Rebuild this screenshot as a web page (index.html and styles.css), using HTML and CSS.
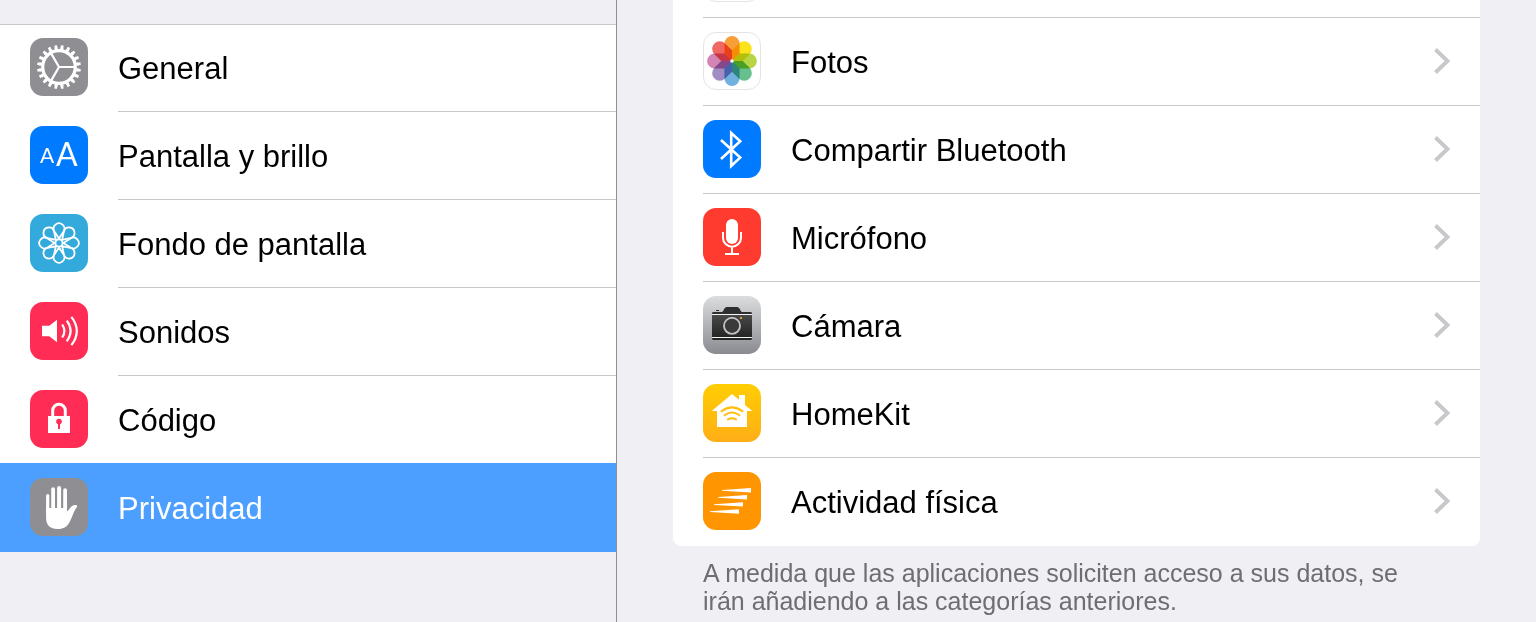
FILE: index.html
```html
<!DOCTYPE html>
<html lang="es">
<head>
    <meta charset="UTF-8">
    <title>Privacidad</title>
    <link rel="stylesheet" href="styles.css">
</head>
<body>
<div class="settings">
    <nav class="sidebar">
        <ul class="menu">
            <li>
                <a href="#general" class="row">
                    <svg class="icon gray" viewBox="0 0 58 58" aria-hidden="true">
                        <g fill="none" stroke="#fff">
                            <circle cx="29" cy="29" r="16.3" stroke-width="3.2"/>
                            <circle cx="29" cy="29" r="18.6" stroke-width="2.4" pathLength="200" stroke-dasharray="5.6 4.4" stroke-dashoffset="-2.2"/>
                            <circle cx="29" cy="29" r="20.6" stroke-width="2.6" pathLength="200" stroke-dasharray="4.2 5.8" stroke-dashoffset="-2.9"/>
                            <path d="M29 29H45M29 29L21 15.1M29 29L21 42.9" stroke-width="2.2"/>
                        </g>
                    </svg>
                    <span class="label">General</span>
                </a>
            </li>
            <li>
                <a href="#pantalla" class="row">
                    <svg class="icon blue" viewBox="0 0 58 58" aria-hidden="true">
                        <text x="10" y="37" class="small-a">A</text>
                        <text x="26" y="40" class="big-a">A</text>
                    </svg>
                    <span class="label">Pantalla y brillo</span>
                </a>
            </li>
            <li>
                <a href="#fondo" class="row">
                    <svg class="icon cyan" viewBox="0 0 58 58" aria-hidden="true">
                        <defs>
                            <path id="petal-line" d="M29 24.6L24.4 17.5A5.4 5.4 0 1 1 33.6 17.5Z"/>
                        </defs>
                        <g fill="none" stroke="#fff" stroke-width="1.8">
                            <circle cx="29" cy="29" r="3.6"/>
                            <use href="#petal-line"/>
                            <use href="#petal-line" transform="rotate(45 29 29)"/>
                            <use href="#petal-line" transform="rotate(90 29 29)"/>
                            <use href="#petal-line" transform="rotate(135 29 29)"/>
                            <use href="#petal-line" transform="rotate(180 29 29)"/>
                            <use href="#petal-line" transform="rotate(225 29 29)"/>
                            <use href="#petal-line" transform="rotate(270 29 29)"/>
                            <use href="#petal-line" transform="rotate(315 29 29)"/>
                        </g>
                    </svg>
                    <span class="label">Fondo de pantalla</span>
                </a>
            </li>
            <li>
                <a href="#sonidos" class="row">
                    <svg class="icon pink" viewBox="0 0 58 58" aria-hidden="true">
                        <path d="M12 23.7H19.3L27 17.7V40.3L19.3 34.3H12Z" fill="#fff"/>
                        <path d="M32.2 22.5Q36.6 29 32.2 35.5M36.8 18.7Q44.4 29 36.8 39.3M41.4 14.8Q52.2 29 41.4 43.2" fill="none" stroke="#fff" stroke-width="2.2"/>
                    </svg>
                    <span class="label">Sonidos</span>
                </a>
            </li>
            <li>
                <a href="#codigo" class="row">
                    <svg class="icon pink" viewBox="0 0 58 58" aria-hidden="true">
                        <path d="M22.7 27V20.6A6.3 6.3 0 0 1 35.3 20.6V27" fill="none" stroke="#fff" stroke-width="3"/>
                        <path d="M18 26H40V43H18Z" fill="#fff"/>
                        <circle cx="29" cy="31.6" r="2.8" fill="#ff2d55"/>
                        <path d="M28 32H30V39H28Z" fill="#ff2d55"/>
                    </svg>
                    <span class="label">Código</span>
                </a>
            </li>
            <li>
                <a href="#privacidad" class="row selected" aria-current="page">
                    <svg class="icon gray" viewBox="0 0 58 58" aria-hidden="true">
                        <g fill="none" stroke="#fff" stroke-linecap="round">
                            <path d="M17.7 34V17.5" stroke-width="3.2"/>
                            <path d="M23.1 34V11.2M35.1 34V12.2" stroke-width="3.8"/>
                            <path d="M29.1 34V10" stroke-width="4"/>
                        </g>
                        <path d="M16.1 28L19.3 30H37V33.3C39.5 32 41 27.2 45 27.1C47 27 47.8 28 46.8 29.2C43.6 33 41.8 41 38.6 45.8C36 49.6 33 51 27.5 51C20 51 16.1 47 16.1 40Z" fill="#fff"/>
                    </svg>
                    <span class="label">Privacidad</span>
                </a>
            </li>
        </ul>
    </nav>

    <main class="detail">
        <ul class="card">
            <li>
                <div class="row">
                    <span class="icon white"></span>
                    <span class="label"></span>
                </div>
            </li>
            <li>
                <a href="#fotos" class="row">
                    <svg class="icon white" viewBox="1 1 56 56" aria-hidden="true">
                        <defs>
                            <path id="petal" d="M29 29L21.4 21.4V11.7A7.6 7.6 0 0 1 36.6 11.7V21.4Z"/>
                        </defs>
                        <g class="petals">
                            <use href="#petal" fill="#f99f3a"/>
                            <use href="#petal" fill="#fbe41e" transform="rotate(45 29 29)"/>
                            <use href="#petal" fill="#b8d545" transform="rotate(90 29 29)"/>
                            <use href="#petal" fill="#66bf8c" transform="rotate(135 29 29)"/>
                            <use href="#petal" fill="#70b1e0" transform="rotate(180 29 29)"/>
                            <use href="#petal" fill="#a18cc4" transform="rotate(225 29 29)"/>
                            <use href="#petal" fill="#d385b5" transform="rotate(270 29 29)"/>
                            <use href="#petal" fill="#f06763" transform="rotate(315 29 29)"/>
                        </g>
                        <circle cx="29" cy="29" r="1.8" fill="#fff"/>
                    </svg>
                    <span class="label">Fotos</span>
                    <svg class="chevron" viewBox="0 0 16 26" aria-hidden="true"><path d="M1.5 1.5L13.5 13L1.5 24.5"/></svg>
                </a>
            </li>
            <li>
                <a href="#bluetooth" class="row">
                    <svg class="icon blue" viewBox="0 0 58 58" aria-hidden="true">
                        <path d="M18 20L37.2 37.6L28.2 46V13L37.2 21.3L18 39" fill="none" stroke="#fff" stroke-width="2.6"/>
                    </svg>
                    <span class="label">Compartir Bluetooth</span>
                    <svg class="chevron" viewBox="0 0 16 26" aria-hidden="true"><path d="M1.5 1.5L13.5 13L1.5 24.5"/></svg>
                </a>
            </li>
            <li>
                <a href="#microfono" class="row">
                    <svg class="icon red" viewBox="0 0 58 58" aria-hidden="true">
                        <rect x="23" y="11" width="12" height="25" rx="6" fill="#fff"/>
                        <path d="M20 24V29.7A9 9 0 0 0 38 29.7V24M29 38.7V46M22 46H36" fill="none" stroke="#fff" stroke-width="2"/>
                    </svg>
                    <span class="label">Micrófono</span>
                    <svg class="chevron" viewBox="0 0 16 26" aria-hidden="true"><path d="M1.5 1.5L13.5 13L1.5 24.5"/></svg>
                </a>
            </li>
            <li>
                <a href="#camara" class="row">
                    <svg class="icon silver" viewBox="0 0 58 58" aria-hidden="true">
                        <defs>
                            <linearGradient id="camera-body" x1="0" y1="0" x2="0" y2="1">
                                <stop offset="0" stop-color="#4a4a4a"/>
                                <stop offset="1" stop-color="#242424"/>
                            </linearGradient>
                        </defs>
                        <path d="M13 15V14H16V15ZM10 16H19C20.5 16 21 11 24 11H34C37 11 37.5 16 39 16H48L49 17V18H9V17Z" fill="#2e2e2e"/>
                        <path d="M9 19H49V41H9Z" fill="url(#camera-body)"/>
                        <path d="M9 18H49V19H9ZM9 41H49V42H9Z" fill="#f4f4f5"/>
                        <path d="M9 42H49V43L48 44H10L9 43Z" fill="#222"/>
                        <circle cx="29" cy="29.8" r="9.6" fill="#2a2a2a"/>
                        <circle cx="29" cy="29.8" r="8.1" fill="#3a3a3a" stroke="#bfc0c3" stroke-width="1.9"/>
                        <path d="M37 21H39V23H37Z" fill="#dca62c"/>
                    </svg>
                    <span class="label">Cámara</span>
                    <svg class="chevron" viewBox="0 0 16 26" aria-hidden="true"><path d="M1.5 1.5L13.5 13L1.5 24.5"/></svg>
                </a>
            </li>
            <li>
                <a href="#homekit" class="row">
                    <svg class="icon yellow" viewBox="0 0 58 58" aria-hidden="true">
                        <path d="M29 10L36 15.8V11H42V20.9L49.3 27H44V43H14V27H8.7Z" fill="#fff"/>
                        <path d="M18.5 27.3Q29 19.4 39.5 27.3M21.6 31.2Q29 26 36.4 31.2M25 35.4Q29 33 33 35.4" fill="none" stroke="#ffbd0e" stroke-width="2" stroke-linecap="round"/>
                    </svg>
                    <span class="label">HomeKit</span>
                    <svg class="chevron" viewBox="0 0 16 26" aria-hidden="true"><path d="M1.5 1.5L13.5 13L1.5 24.5"/></svg>
                </a>
            </li>
            <li>
                <a href="#actividad" class="row">
                    <svg class="icon orange" viewBox="0 0 58 58" aria-hidden="true">
                        <path d="M19 18L48 16V20.4L19 18.8ZM15 25L44 23V27.4L15 25.8ZM11 32.2L40 30.2V34.6L11 33ZM7 39.3L36 37.3V41.7L7 40.1Z" fill="#fff"/>
                    </svg>
                    <span class="label">Actividad física</span>
                    <svg class="chevron" viewBox="0 0 16 26" aria-hidden="true"><path d="M1.5 1.5L13.5 13L1.5 24.5"/></svg>
                </a>
            </li>
        </ul>
        <p class="note">A medida que las aplicaciones soliciten acceso a sus datos, se irán añadiendo a las categorías anteriores.</p>
    </main>
</div>
</body>
</html>
```
FILE: styles.css
```css
* {
    box-sizing: border-box;
}

body {
    margin: 0;
    background: #efeff4;
    color: #000;
    font-family: "Liberation Sans", Arial, sans-serif;
    font-size: 31px;
}

ul {
    margin: 0;
    padding: 0;
    list-style-type: none;
}

.settings {
    display: flex;
    height: 100vh;
    overflow: hidden;
}

.sidebar {
    flex: 0 0 617px;
    padding-top: 24px;
    border-right: 1px solid #8e8e93;
}

.menu {
    background: #fff;
    box-shadow: inset 0 1px #c8c7cc;
}

/* rows, shared by both lists */
.row {
    display: flex;
    align-items: center;
    height: 88px;
    padding-left: 30px;
    color: inherit;
    text-decoration: none;
}

.label {
    flex: 1;
    height: 88px;
    padding-top: 2px;
    line-height: 85px;
}

.menu .label {
    border-bottom: 1px solid #c8c7cc;
}

.menu li:last-child .label {
    border-bottom: 0;
}

.row.selected {
    margin-top: -1px;
    padding-top: 1px;
    height: 89px;
    background: #4c9fff;
    color: #fff;
    position: relative;
}

.icon {
    flex: none;
    width: 58px;
    height: 58px;
    margin: 0 30px 2px 0;
    border-radius: 13px;
}

.gray { background: #8e8e93; }
.blue { background: #007aff; }
.cyan { background: #34aadc; }
.pink { background: #ff2d55; }
.red { background: #ff3b30; }
.orange { background: #ff9500; }
.silver { background: linear-gradient(#dcddde, #898b91); }
.yellow { background: linear-gradient(#ffcd02, #ffae17); }

.white {
    background: #fff;
    border: 1px solid #e4e4e6;
}

.small-a, .big-a {
    fill: #fff;
    font-family: Lato, sans-serif;
}

.small-a {
    font-size: 21px;
}

.big-a {
    font-size: 32px;
}

.petals {
    isolation: isolate;
}

.petals use {
    mix-blend-mode: multiply;
}

.detail {
    flex: 1;
    min-width: 0;
    padding: 0 56px;
}

/* scrolled list, the first row is almost out of view */
.card {
    margin-top: -70px;
    padding-left: 30px;
    background: #fff;
    border-radius: 8px;
}

.card .row {
    position: relative;
    padding-left: 0;
    box-shadow: inset 0 -1px #c8c7cc;
}

.card li:last-child .row {
    box-shadow: none;
}

.chevron {
    position: absolute;
    right: 30px;
    top: 30px;
    width: 16px;
    height: 26px;
    fill: none;
    stroke: #c7c7cc;
    stroke-width: 4px;
}

.note {
    margin: 0;
    padding: 13px 48px 0 30px;
    color: #6d6d72;
    font-size: 25px;
    line-height: 28px;
}
```
